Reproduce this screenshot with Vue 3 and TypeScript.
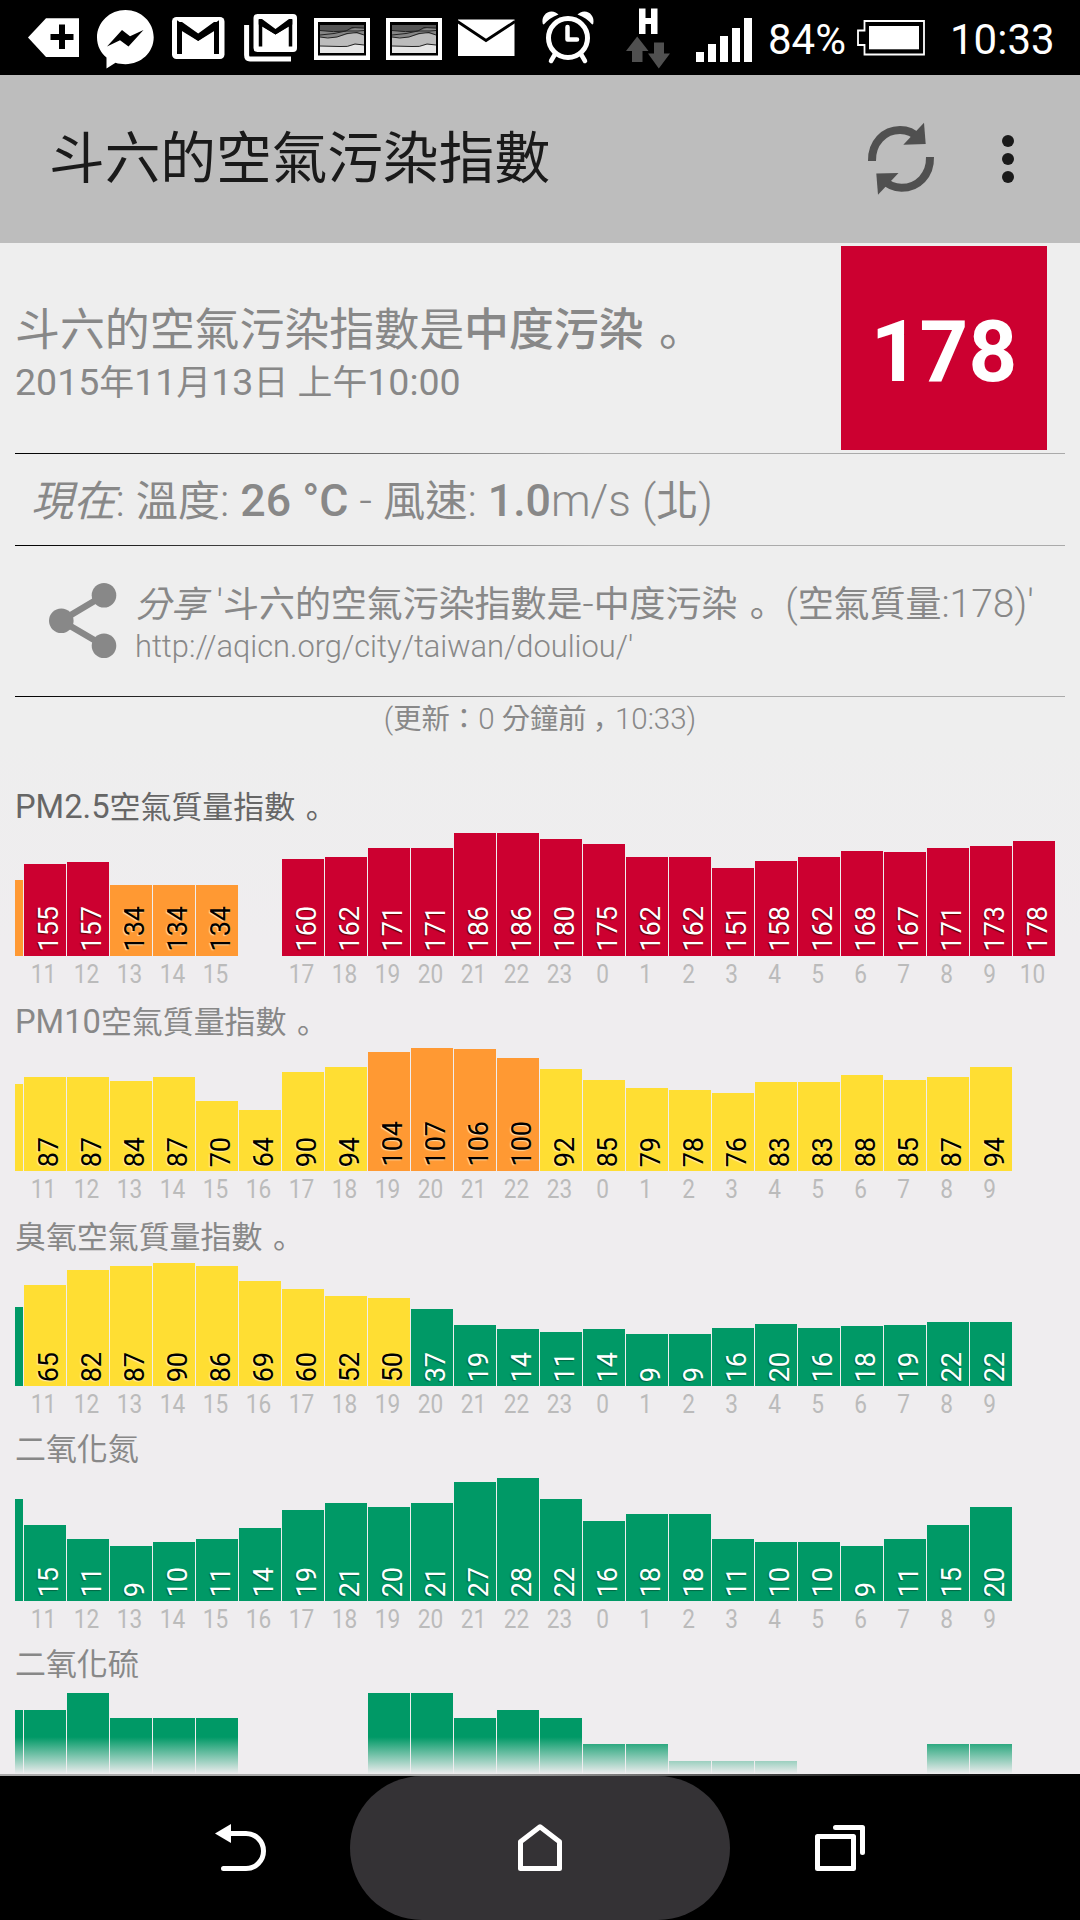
<script setup lang="ts">
import { h } from 'vue'

interface Bar {
  hour: string
  value: string
  height: number
  tone: string
}

interface Chart {
  title: string
  strong?: boolean
  edge: { height: number; tone: string }
  bars: Bar[]
}

// Splits a string into Latin and CJK runs, so each script keeps its own size.
const Mixed = (props: { text: string }) =>
  (props.text.match(/[。，]|[\u2e80-\u9fff：]+|[^\u2e80-\u9fff：，。]+/g) ?? []).map((run) => {
    if (run === '。') return h('span', { class: 'run-stop' }, run)
    if (run === '，') return h('span', { class: 'run-comma' }, run)
    return h('span', { class: /[\u2e80-\u9fff：]/.test(run) ? 'run-cjk' : 'run-latin' }, run)
  })
Mixed.props = ['text']

const hours = [11, 12, 13, 14, 15, 16, 17, 18, 19, 20, 21, 22, 23, 0, 1, 2, 3, 4, 5, 6, 7, 8, 9, 10]

function build(values: (number | null)[], height: (v: number) => number, tone: (v: number) => string): Bar[] {
  return values.map((v, i) =>
    v === null
      ? { hour: '', value: '', height: 0, tone: 'none' }
      : { hour: String(hours[i]), value: String(v), height: Math.round(height(v)), tone: tone(v) },
  )
}

const aqiTone = (v: number) => (v > 150 ? 'red' : v >= 100 ? 'orange' : v >= 50 ? 'yellow' : 'green')

const charts: Chart[] = [
  {
    title: 'PM2.5空氣質量指數 。',
    strong: true,
    edge: { height: 76, tone: 'orange' },
    bars: build(
      [155, 157, 134, 134, 134, null, 160, 162, 171, 171, 186, 186, 180, 175, 162, 162, 151, 158, 162, 168, 167, 171, 173, 178],
      (v) => v - 63.3,
      aqiTone,
    ),
  },
  {
    title: 'PM10空氣質量指數 。',
    edge: { height: 87, tone: 'yellow' },
    bars: build(
      [87, 87, 84, 87, 70, 64, 90, 94, 104, 107, 106, 100, 92, 85, 79, 78, 76, 83, 83, 88, 85, 87, 94],
      (v) => 61 + (v - 64) * 1.449,
      aqiTone,
    ),
  },
  {
    title: '臭氧空氣質量指數 。',
    edge: { height: 79, tone: 'green' },
    bars: build(
      [65, 82, 87, 90, 86, 69, 60, 52, 50, 37, 19, 14, 11, 14, 9, 9, 16, 20, 16, 18, 19, 22, 22],
      (v) => 52.3 + (v - 9) * 0.873,
      aqiTone,
    ),
  },
  {
    title: '二氧化氮',
    edge: { height: 102, tone: 'green' },
    bars: build(
      [15, 11, 9, 10, 11, 14, 19, 21, 20, 21, 27, 28, 22, 16, 18, 18, 11, 10, 10, 9, 11, 15, 20],
      (v) => 55 + (v - 9) * 3.579,
      aqiTone,
    ),
  },
  {
    title: '二氧化硫',
    edge: { height: 106, tone: 'green' },
    bars: [106, 123, 98, 98, 98, 0, 0, 0, 123, 123, 98, 106, 98, 72, 72, 55, 55, 55, 0, 0, 0, 72, 72].map((height) => ({
      hour: '',
      value: '',
      height,
      tone: height ? 'green' : 'none',
    })),
  },
]
</script>

<template>
  <div class="screen">
    <header class="status">
      <svg class="status-left" width="520" height="75" viewBox="0 0 520 75">
        <path d="M28 37.5L46 18.300H79V57H46Z" fill="#fff" />
        <path d="M50.500 37H73.500M62 24.500V49" stroke="#000" stroke-width="6" />
        <path d="M125.500 10C110 10 97 22 97 37.500C97 46 101 53 106.500 57.500V68.500L115.500 62.800C118.500 63.800 122 64.200 125.500 64.200C141 64.200 153.700 52.500 153.700 37.300C153.700 22 141 10 125.500 10Z" fill="#fff" />
        <path d="M107 46.500L122 30L130 36.300L143.500 30L128.500 46.500L120 40.200Z" fill="#000" />
        <rect x="172" y="17" width="52.500" height="42" rx="4.500" fill="#fff" />
        <path d="M179.500 54V25L198.200 37.800L216.500 25V54" fill="none" stroke="#000" stroke-width="5" />
        <path d="M177 22H182L198.200 33.500L214 22H219V28L198.200 41L177 28Z" fill="#000" />
        <rect x="253.500" y="14" width="43.500" height="38" rx="4" fill="#fff" />
        <path d="M260.500 46.500V23L275.500 32.500L290.500 23V46.500" fill="none" stroke="#000" stroke-width="3.500" />
        <path d="M258.700 19H262L275.500 29L289 19H292.300V24.500L275.500 34.500L258.700 24.500Z" fill="#000" />
        <path d="M246.600 25V55Q246.600 59 250 59H291" fill="none" stroke="#fff" stroke-width="5" />
        <g v-for="x in [314, 386]" :key="x" :transform="`translate(${x} 18)`">
          <rect width="56" height="42" fill="#fff" />
          <rect x="4" y="4" width="48" height="33.500" fill="#000" />
          <rect x="6" y="7" width="44" height="28" fill="#e6e6e6" />
          <path d="M6 7H50V27L41 26.500Q33 29.500 26 28.500L6 28Z" fill="#bcbcbc" />
          <path d="M6 7H50V17L39 15L23 19Q13 20.500 6 19Z" fill="#868686" />
          <path d="M6 7H50V10.500L41 10L32 13Q20 14.500 6 12.500Z" fill="#555" />
          <path d="M6 12.500Q20 14.500 32 13L38 9.500L50 10M6 17L20 15.500L32 13H44L50 12.500M6 19Q13 21 23 19L33 15.500L43 14.500L50 17M6 28L26 28.500Q33 29.500 41 26L50 27" fill="none" stroke="#222" stroke-width="1" />
        </g>
        <rect x="458" y="19.500" width="56.500" height="36.500" fill="#fff" />
        <path d="M457.500 21.500L486 40.500L515 21.500" fill="none" stroke="#000" stroke-width="2.800" />
      </svg>
      <svg class="status-right" width="220" height="75" viewBox="540 0 220 75">
        <circle cx="568" cy="38" r="19.500" fill="none" stroke="#fff" stroke-width="5" />
        <path d="M567.500 27V39.500H577" fill="none" stroke="#fff" stroke-width="4.500" stroke-linecap="round" stroke-linejoin="round" />
        <path d="M542.800 24C541 17 546 11.500 551.500 11.500C554.500 11.500 557 13 558.500 14.500C552 17 547.500 20 543.800 24.500ZM593.200 24C595 17 590 11.500 584.500 11.500C581.500 11.500 579 13 577.500 14.500C584 17 588.500 20 592.200 24.500Z" fill="#fff" />
        <path d="M554.500 55L551 61M581.500 55L585 61" stroke="#fff" stroke-width="4.500" stroke-linecap="round" />
        <path d="M639 8.500H645.500V18H651V8.500H657.500V34H651V24H645.500V34H639Z" fill="#fff" />
        <path d="M637.200 36.500L648.500 51H642.500V62H632V51H626Z" fill="#505050" />
        <path d="M658.800 68.500L670 53.500H664V42.500H654V53.500H648Z" fill="#505050" />
        <path d="M696 52H704V62H696ZM708 44H716V62H708ZM720 36H728V62H720ZM732 28H740V62H732ZM744 18H752V62H744Z" fill="#fff" />
      </svg>
      <span class="percent">84%</span>
      <svg class="battery" width="70" height="40" viewBox="856 18 70 40">
        <path d="M864.500 21H924V54.500H864.500V45H858V30.500H864.500Z" fill="none" stroke="#fff" stroke-width="1.800" />
        <rect x="869" y="26" width="50" height="23.300" fill="#fff" />
      </svg>
      <span class="clock">10:33</span>
    </header>

    <div class="appbar">
      <h1><Mixed text="斗六的空氣污染指數" /></h1>
      <svg class="refresh" width="70" height="76" viewBox="866 121 70 76">
        <path d="M872 161C871.500 143 884 130 900 130C908 130 914 133 918.500 138" fill="none" stroke="#505050" stroke-width="8" />
        <path d="M924 122.700L925.700 144L903.300 144.700Z" fill="#505050" />
        <path d="M930 157C930.500 175 918 187.800 901.500 187.800C894 187.800 887 184 883.500 180" fill="none" stroke="#505050" stroke-width="8" />
        <path d="M878 194.700L876.300 173.600L898.500 173Z" fill="#505050" />
      </svg>
      <svg class="more" width="14" height="50" viewBox="0 0 14 50">
        <circle cx="7" cy="7" r="6" /><circle cx="7" cy="25" r="6" /><circle cx="7" cy="43" r="6" />
      </svg>
    </div>

    <main class="content">
      <section class="summary">
        <div class="summary-text">
          <p class="headline"><Mixed text="斗六的空氣污染指數是" /><b><Mixed text="中度污染" /></b><Mixed text=" 。" /></p>
          <p class="date"><Mixed text="2015年11月13日 上午10:00" /></p>
        </div>
        <div class="score">178</div>
      </section>
      <div class="rule"></div>
      <section class="now">
        <i><Mixed text="現在" /></i><Mixed text=": 溫度: " /><b>26 °C</b><Mixed text=" - 風速: " /><b>1.0</b><Mixed text="m/s (北)" />
      </section>
      <div class="rule"></div>
      <section class="share">
        <svg class="share-icon" width="70" height="78" viewBox="48 582 70 78">
          <path d="M104 595.300L61.300 620.700L104 645.700" fill="none" stroke="#888" stroke-width="6.500" />
          <circle cx="104" cy="595.300" r="12.300" fill="#888" />
          <circle cx="61.300" cy="620.700" r="12.300" fill="#888" />
          <circle cx="104" cy="645.700" r="12.300" fill="#888" />
        </svg>
        <div>
          <p class="share-title"><i><Mixed text="分享" /></i><Mixed text=" '斗六的空氣污染指數是-中度污染 。 (空氣質量:178)'" /></p>
          <p class="share-url">http://aqicn.org/city/taiwan/douliou/'</p>
        </div>
      </section>
      <div class="rule"></div>
      <p class="updated"><Mixed text="(更新：0 分鐘前，10:33)" /></p>

      <section v-for="chart in charts" :key="chart.title" class="chart">
        <h2 :class="{ strong: chart.strong }"><Mixed :text="chart.title" /></h2>
        <div class="bars">
          <div class="edge" :class="chart.edge.tone" :style="{ height: chart.edge.height + 'px' }"></div>
          <div v-for="(bar, i) in chart.bars" :key="i" class="bar" :class="bar.tone" :style="{ height: bar.height + 'px' }">
            <span>{{ bar.value }}</span>
          </div>
        </div>
        <div class="hours">
          <span v-for="(bar, i) in chart.bars" :key="i">{{ bar.hour }}</span>
        </div>
      </section>
      <div class="fade"></div>
    </main>

    <div class="divider"></div>
    <nav class="nav">
      <svg class="nav-back" width="54" height="52" viewBox="214 1822 54 52">
        <path d="M215 1833.500L231 1824V1843Z" fill="#fff" />
        <path d="M229 1833.500H246A17.500 17.500 0 0 1 246 1868.500H223.500" fill="none" stroke="#fff" stroke-width="5" stroke-linecap="round" />
      </svg>
      <div class="nav-home">
        <svg width="48" height="52" viewBox="516 1822 48 52">
          <path d="M520.500 1868.500V1841.800L540 1826.800L559.500 1841.800V1868.500Z" fill="none" stroke="#fff" stroke-width="5" stroke-linejoin="round" />
        </svg>
      </div>
      <svg class="nav-recent" width="54" height="52" viewBox="813 1822 54 52">
        <rect x="817.500" y="1836.500" width="36" height="32" fill="none" stroke="#fff" stroke-width="5" stroke-linejoin="round" />
        <path d="M835.500 1827.500H862.500V1852.500" fill="none" stroke="#fff" stroke-width="5" stroke-linecap="round" stroke-linejoin="round" />
      </svg>
    </nav>
  </div>
</template>

<style>
body { margin: 0; background: #000; }
.run-cjk { font-size: var(--cjk, 0.96em); font-weight: var(--cjk-weight, inherit); }
.run-stop, .run-comma { font-family: "Noto Sans CJK SC", sans-serif; font-size: var(--cjk, 0.96em); font-weight: 400; }
.run-stop { padding-left: 0.08em; letter-spacing: var(--stop-trim, -0.08em); }
.run-comma { padding-left: 0.22em; letter-spacing: -0.22em; }
</style>

<style scoped>
.screen {
  width: 1080px;
  height: 1920px;
  overflow: hidden;
  display: flex;
  flex-direction: column;
  background: #000;
  font-family: Roboto, "Noto Sans CJK TC", sans-serif;
  color: #888;
}
p, h1, h2 { margin: 0; font-weight: inherit; white-space: pre; }
.status { height: 75px; flex: none; display: flex; color: #fff; font-size: 42px; line-height: 79px; background: #000; }
.status svg { flex: none; }
.status-right { margin-left: 20px; }
.percent { width: 88px; margin-left: 8px; }
.battery { margin-top: 18px; }
.clock { margin-left: 24px; }
.appbar { height: 168px; flex: none; display: flex; background: #bdbdbd; color: #1a1a1a; }
.appbar h1 { width: 866px; padding-left: 49px; box-sizing: border-box; font-size: 58px; line-height: 166px; }
.refresh { margin-top: 46px; }
.more { margin: 59px 0 0 65px; fill: #1a1a1a; }
.content {
  height: 1531px;
  flex: none;
  overflow: hidden;
  position: relative;
  background: linear-gradient(#eee 0, #eee 500px, #efedef 700px, #efedef 100%);
}
.summary { height: 210px; display: flex; justify-content: space-between; }
.summary-text { padding: 51px 0 0 15px; }
.headline { font-size: 46.800px; line-height: 66px; height: 63px; }
.headline b { font-weight: 500; }
.date { font-size: 37.500px; line-height: 50px; --cjk: 0.93em; }
.score {
  width: 206px;
  height: 204px;
  margin: 3px 33px 0 0;
  background: #cc0030;
  color: #fff;
  font-size: 85px;
  font-weight: 700;
  line-height: 212px;
  text-align: center;
}
.rule { height: 1px; margin: 0 15px; background: linear-gradient(90deg, #000, #aaa 55%); }
.now {
  height: 91px;
  padding-left: 31px;
  font-size: 44.700px;
  line-height: 95px;
  font-weight: 300;
  white-space: pre;
  --cjk: 0.944em;
  --cjk-weight: 400;
}
.now b { font-weight: 500; }
.share { height: 150px; display: flex; font-weight: 300; --cjk-weight: 400; }
.share-icon { flex: none; margin: 36px 17px 0 48px; }
.share-title {
  font-size: 39px;
  line-height: 50px;
  padding-top: 30px;
  height: 51px;
  --cjk: 0.922em;
  --stop-trim: -0.28em;
}
.share-url { font-size: 30.850px; line-height: 40px; }
.updated { height: 83px; text-align: center; font-size: 29.500px; line-height: 40px; font-weight: 300; --cjk-weight: 400; }
.chart { height: 215px; }
.chart h2 { height: 53px; padding-left: 15px; font-size: 32.700px; line-height: 49px; color: #888; --cjk: 0.946em; }
.chart h2.strong { color: #666; }
.bars { height: 123px; display: flex; align-items: flex-end; gap: 1px; padding-left: 15px; }
.edge { width: 8px; }
.bar { width: 42px; display: flex; justify-content: center; align-items: flex-end; }
.bar span {
  writing-mode: vertical-rl;
  transform: rotate(180deg);
  font-size: 27px;
  line-height: 32px;
  padding-top: 4px;
  margin-left: 7px;
}
.red { background: #cc0030; color: #fff; text-shadow: -1px -1px 1px #600; }
.green { background: #009966; color: #fff; text-shadow: -1px -1px 1px #064; }
.orange { background: #ff9933; color: #000; text-shadow: -1px -1px 1px #fda; }
.yellow { background: #ffde33; color: #000; text-shadow: -1px -1px 1px #fea; }
.hours { height: 39px; display: flex; padding-left: 21.500px; font-size: 26px; line-height: 37px; color: #bbb; }
.hours span { width: 43px; flex: none; text-align: center; transform: scaleX(0.87); }
.fade {
  position: absolute;
  left: 0;
  right: 0;
  bottom: 0;
  height: 37px;
  background: linear-gradient(rgba(239, 237, 239, 0), #efedef);
}
.divider { height: 2px; flex: none; background: linear-gradient(90deg, #aaa 45%, #222 80%, #000); }
.nav { height: 144px; flex: none; display: flex; }
.nav svg { flex: none; }
.nav-back { margin: 46px 82px 0 214px; }
.nav-home { width: 380px; height: 144px; border-radius: 72px; background: #343235; display: flex; justify-content: center; padding-top: 46px; box-sizing: border-box; }
.nav-recent { margin: 46px 0 0 83px; }
</style>
